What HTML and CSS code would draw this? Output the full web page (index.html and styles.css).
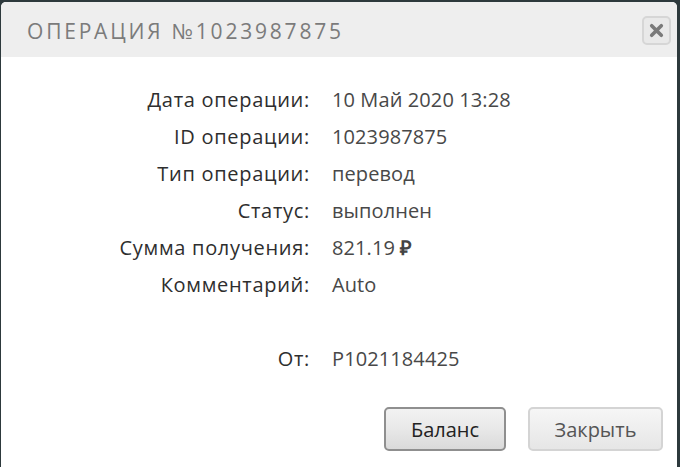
FILE: index.html
```html
<!DOCTYPE html>
<html lang="ru">
<head>
<meta charset="utf-8">
<title>Операция</title>
<link rel="stylesheet" href="styles.css">
</head>
<body>
<div class="dialog">
  <div class="header">
    <div class="title">ОПЕРАЦИЯ №1023987875</div>
    <button class="close" aria-label="Закрыть">
      <svg width="15" height="15" viewBox="0 0 15 15"><path d="M2.7 2.7 L12.3 12.3 M12.3 2.7 L2.7 12.3" stroke="#7a7a7a" stroke-width="3.6" stroke-linecap="round"/></svg>
    </button>
  </div>
  <div class="content">
    <div class="rows">
      <div class="label">Дата операции:</div><div class="value">10 Май 2020 13:28</div>
      <div class="label">ID операции:</div><div class="value">1023987875</div>
      <div class="label">Тип операции:</div><div class="value">перевод</div>
      <div class="label">Статус:</div><div class="value">выполнен</div>
      <div class="label">Сумма получения:</div><div class="value">821.19 <span class="rub">₽</span></div>
      <div class="label">Комментарий:</div><div class="value">Auto</div>
      <div class="label"></div><div class="value"></div>
      <div class="label">От:</div><div class="value">P1021184425</div>
    </div>
    <div class="footer">
      <button class="btn btn-primary">Баланс</button>
      <button class="btn btn-secondary">Закрыть</button>
    </div>
  </div>
</div>
</body>
</html>
```
FILE: styles.css
```css
html, body {
  margin: 0;
  padding: 0;
  height: 100%;
}
body {
  background: #2d393c;
  overflow: hidden;
}
.dialog {
  margin: 2px 3px 0 1px;
  height: calc(100% - 2px);
  background: #ffffff;
  border-radius: 5px 5px 0 0;
  overflow: hidden;
  display: flex;
  flex-direction: column;
}
.header {
  height: 55px;
  background: #eeeeee;
  display: flex;
  align-items: center;
  justify-content: space-between;
  padding: 0 6px 0 26px;
}
.title {
  font-family: "Open Sans", sans-serif;
  font-size: 21px;
  letter-spacing: 2.8px;
  color: #7b7b7b;
  padding-top: 2px;
}
.close {
  width: 29px;
  height: 29px;
  margin-top: 2px;
  padding: 0;
  border: 2px solid #d6d6d6;
  border-radius: 5px;
  background: #e9e9e9;
  display: flex;
  align-items: center;
  justify-content: center;
}
.content {
  padding-top: 24px;
}
.rows {
  display: grid;
  grid-template-columns: 309px 1fr;
  column-gap: 22px;
  grid-auto-rows: 37px;
  align-items: center;
  font-family: "Open Sans", sans-serif;
  font-size: 20px;
}
.label {
  text-align: right;
  color: #2e2e2e;
  letter-spacing: 0.7px;
}
.value {
  color: #484848;
  letter-spacing: 0.1px;
}
.rub {
  font-weight: bold;
  color: #444;
}
.footer {
  display: flex;
  justify-content: flex-end;
  gap: 22px;
  padding: 30px 14px 0 0;
}
.btn {
  height: 44px;
  font-family: "Open Sans", sans-serif;
  font-size: 20px;
  border-radius: 5px;
  padding: 0;
}
.btn-primary {
  width: 122px;
  border: 2px solid #8f8f8f;
  background: linear-gradient(#f2f2f2, #e8e8e8 50%, #dadada);
  color: #222222;
}
.btn-secondary {
  width: 135px;
  border: 2px solid #d4d4d4;
  background: linear-gradient(#f6f6f6, #eeeeee 50%, #e6e6e6);
  color: #555555;
}
```
